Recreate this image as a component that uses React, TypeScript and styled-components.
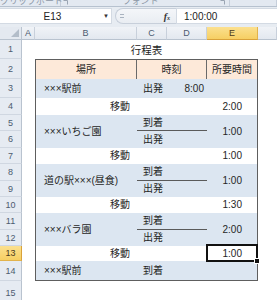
import React from 'react';
import styled, { createGlobalStyle } from 'styled-components';

const ROW_H = [19, 20, 19, 17, 16, 17, 16, 17, 16, 16, 17, 16, 15, 20, 24];
const COLS = [
  { id: 'A', w: 13 },
  { id: 'B', w: 102 },
  { id: 'C', w: 30 },
  { id: 'D', w: 40 },
  { id: 'E', w: 51 },
  { id: '', w: 0 },
];
const ACTIVE_COL = 'E';
const ACTIVE_ROW = 13;

const GlobalStyle = createGlobalStyle`
  html, body { margin: 0; padding: 0; background: #fff; }
  body {
    font-family: "Noto Sans CJK JP", "Liberation Sans", sans-serif;
    overflow: hidden;
  }
`;

const Window = styled.div`
  width: 277px;
  height: 300px;
  overflow: hidden;
  display: flex;
  flex-direction: column;
  background: #fff;
`;

/* ribbon bottom edge, only the group captions' lower half shows */
const Ribbon = styled.div`
  height: 6px;
  flex: none;
  display: flex;
  overflow: hidden;
  background: #e3e9f1;
  border-bottom: 1px solid #b7c2cf;
`;

const RibbonGroup = styled.div<{ $w?: number }>`
  ${p => (p.$w ? `width: ${p.$w}px; flex: none;` : 'flex: 1;')}
  display: flex;
  align-items: flex-end;
  padding-right: 3px;
  border-right: 1px solid #c6cfdb;
`;

const RibbonLabel = styled.span`
  flex: 1;
  text-align: center;
  font-size: 9px;
  line-height: 9px;
  margin-bottom: 1px;
  color: #8c97a6;
  white-space: nowrap;
`;

const Launcher = styled.svg`
  flex: none;
  margin-bottom: 1px;
`;

const FormulaBar = styled.div`
  height: 20px;
  flex: none;
  display: flex;
  align-items: flex-start;
  padding-top: 1px;
  box-sizing: border-box;
  background: #e7ecf2;
`;

const NameBox = styled.div`
  width: 112px;
  height: 16px;
  box-sizing: border-box;
  display: flex;
  align-items: center;
  background: #fff;
  border: 1px solid #d3dae3;
  border-left: none;
  font-family: "Liberation Sans", sans-serif;
  font-size: 10px;
  color: #222;
`;

const NameText = styled.span`
  flex: 1;
  text-align: center;
  padding-left: 2px;
`;

const DropArrow = styled.span`
  width: 8px;
  font-size: 6px;
  color: #333;
`;

const FxArea = styled.div`
  width: 61px;
  height: 16px;
  margin-left: 3px;
  box-sizing: border-box;
  display: flex;
  align-items: center;
  border: 1px solid #c7cfda;
  border-right: none;
  border-radius: 8px 0 0 8px;
  background: linear-gradient(#f4f6f9, #e9edf2);
`;

const Grip = styled.span`
  width: 4px;
  height: 2px;
  margin-left: 4px;
  border-top: 1px solid #a9b3c0;
  border-bottom: 1px solid #a9b3c0;
`;

const Fx = styled.span`
  margin-left: auto;
  margin-right: 6px;
  font-family: "Liberation Serif", serif;
  font-style: italic;
  font-weight: bold;
  font-size: 10px;
  color: #333;
  & sub { font-size: 6px; vertical-align: baseline; }
`;

const FormulaInput = styled.div`
  flex: 1;
  height: 16px;
  box-sizing: border-box;
  display: flex;
  align-items: center;
  padding-left: 7px;
  background: #fff;
  border: 1px solid #d3dae3;
  border-right: none;
  font-family: "Liberation Sans", sans-serif;
  font-size: 10px;
  color: #222;
`;

const Sheet = styled.div`
  flex: 1;
  display: grid;
  grid-template-columns: 22px ${COLS.map(c => (c.w ? `${c.w}px` : '1fr')).join(' ')};
  grid-template-rows: 13px ${ROW_H.map(h => `${h}px`).join(' ')} 1fr;
  background: #fff;
`;

const headBox = `
  box-sizing: border-box;
  display: flex;
  align-items: center;
  justify-content: center;
  font-family: "Liberation Sans", sans-serif;
  font-size: 9px;
`;

const Corner = styled.div`
  ${headBox}
  grid-row: 1;
  grid-column: 1;
  justify-content: flex-end;
  align-items: flex-end;
  padding: 0 2px 2px 0;
  background: #e4e9f0;
  border-right: 1px solid #b9c3cf;
  border-bottom: 1px solid #b9c3cf;
`;

const ColHead = styled.div<{ $c: number; $active?: boolean }>`
  ${headBox}
  grid-row: 1;
  grid-column: ${p => p.$c};
  background: ${p => (p.$active ? 'linear-gradient(#fbe08f, #f6cf63)' : 'linear-gradient(#f0f3f7, #e3e8ef)')};
  border-right: 1px solid ${p => (p.$active ? '#e2b34c' : '#c8d0db')};
  border-bottom: 1px solid ${p => (p.$active ? '#d9a23a' : '#b9c3cf')};
  color: ${p => (p.$active ? '#4a3b1c' : '#4c5b70')};
`;

const RowHead = styled.div<{ $r: number; $active?: boolean }>`
  ${headBox}
  grid-column: 1;
  grid-row: ${p => p.$r};
  background: ${p => (p.$active ? 'linear-gradient(#fbe08f, #f6cf63)' : '#e6ebf2')};
  border-right: 1px solid ${p => (p.$active ? '#d9a23a' : '#b9c3cf')};
  border-bottom: 1px solid ${p => (p.$active ? '#e2b34c' : '#d0d7e1')};
  color: ${p => (p.$active ? '#4a3b1c' : '#4c5b70')};
`;

const Title = styled.div`
  grid-row: 2;
  grid-column: 3 / 7;
  display: flex;
  align-items: center;
  justify-content: center;
  font-size: 10.5px;
  color: #222;
`;

const Table = styled.div`
  grid-row: 3 / 16;
  grid-column: 3 / 7;
  display: flex;
  flex-direction: column;
  border: 1px solid #5e5e5e;
  color: #262626;
  font-family: "Liberation Sans", "Noto Sans CJK JP", sans-serif;
  font-size: 10px;
`;

const Band = styled.div<{ $rows: string; $tone: 'head' | 'tint' | 'plain' }>`
  display: grid;
  grid-template-columns: 101px 30px 40px 50px;
  grid-template-rows: ${p => p.$rows};
  background: ${p => (p.$tone === 'head' ? '#fde9d9' : p.$tone === 'tint' ? '#dce6f1' : '#fff')};
`;

const Cell = styled.div<{
  $col: string;
  $row?: string;
  $align?: 'start' | 'center' | 'end';
  $pad?: string;
  $rule?: boolean;
  $divide?: boolean;
}>`
  position: relative;
  grid-column: ${p => p.$col};
  grid-row: ${p => p.$row ?? 'auto'};
  box-sizing: border-box;
  display: flex;
  align-items: center;
  justify-content: ${p => (p.$align === 'end' ? 'flex-end' : p.$align === 'center' ? 'center' : 'flex-start')};
  padding: ${p => p.$pad ?? '0'};
  white-space: nowrap;
  line-height: 1;
  ${p => (p.$rule ? 'border-bottom: 1px solid #5a5a5a;' : '')}
  ${p => (p.$divide ? 'border-right: 1px solid #6a6a6a;' : '')}
`;

const Selection = styled.div`
  position: absolute;
  top: -2px;
  left: -1px;
  right: -1px;
  bottom: -1px;
  border: 2px solid #111;
  pointer-events: none;
`;

const FillHandle = styled.span`
  position: absolute;
  right: -4px;
  bottom: -4px;
  width: 4px;
  height: 4px;
  background: #111;
  border: 1px solid #fff;
`;

type Stop = { place: string; span: [number, number]; time: string };
type Move = { time: string; h: number; selected?: boolean };

const stops: Stop[] = [
  { place: '×××いちご園', span: [16, 17], time: '1:00' },
  { place: '道の駅×××(昼食)', span: [17, 16], time: '1:00' },
  { place: '×××バラ園', span: [17, 16], time: '2:00' },
];

const moves: Move[] = [
  { time: '2:00', h: 17 },
  { time: '1:00', h: 16 },
  { time: '1:30', h: 16 },
  { time: '1:00', h: 15, selected: true },
];

const MoveRow = ({ m }: { m: Move }) => (
  <Band $rows={`${m.h}px`} $tone="plain">
    <Cell $col="1" $align="end" $pad="0 7px 0 0">移動</Cell>
    <Cell $col="4" $align="end" $pad="0 15px 0 0">
      {m.time}
      {m.selected && (
        <Selection>
          <FillHandle />
        </Selection>
      )}
    </Cell>
  </Band>
);

const StopRow = ({ s }: { s: Stop }) => (
  <Band $rows={`${s.span[0]}px ${s.span[1]}px`} $tone="tint">
    <Cell $col="1" $row="1 / 3" $pad="0 0 0 8px">{s.place}</Cell>
    <Cell $col="2 / 4" $row="1" $pad="0 0 0 6px" $rule>到着</Cell>
    <Cell $col="2 / 4" $row="2" $pad="0 0 0 6px">出発</Cell>
    <Cell $col="4" $row="1 / 3" $align="end" $pad="0 15px 0 0">{s.time}</Cell>
  </Band>
);

export default function App() {
  return (
    <>
      <GlobalStyle />
      <Window>
        <Ribbon>
          <RibbonGroup $w={57}>
            <RibbonLabel>クリップボード</RibbonLabel>
            <Launcher width="6" height="5" viewBox="0 0 6 5">
              <path d="M0.5 0.5h4v4" fill="none" stroke="#9aa5b3" />
            </Launcher>
          </RibbonGroup>
          <RibbonGroup $w={165}>
            <RibbonLabel>フォント</RibbonLabel>
            <Launcher width="6" height="5" viewBox="0 0 6 5">
              <path d="M0.5 0.5h4v4" fill="none" stroke="#9aa5b3" />
            </Launcher>
          </RibbonGroup>
          <RibbonGroup>
            <RibbonLabel />
          </RibbonGroup>
        </Ribbon>

        <FormulaBar>
          <NameBox>
            <NameText>E13</NameText>
            <DropArrow>▼</DropArrow>
          </NameBox>
          <FxArea>
            <Grip />
            <Fx>
              f<sub>x</sub>
            </Fx>
          </FxArea>
          <FormulaInput>1:00:00</FormulaInput>
        </FormulaBar>

        <Sheet>
          <Corner>
            <svg width="8" height="8" viewBox="0 0 8 8">
              <path d="M8 0V8H0Z" fill="#b3bdc9" />
            </svg>
          </Corner>
          {COLS.map((c, i) => (
            <ColHead key={i} $c={i + 2} $active={c.id === ACTIVE_COL}>
              {c.id}
            </ColHead>
          ))}
          {ROW_H.map((_, i) => (
            <RowHead key={i} $r={i + 2} $active={i + 1 === ACTIVE_ROW}>
              {i + 1}
            </RowHead>
          ))}

          <Title>行程表</Title>

          <Table>
            <Band $rows="19px" $tone="head">
              <Cell $col="1" $align="center" $divide>場所</Cell>
              <Cell $col="2 / 4" $align="center" $divide>時刻</Cell>
              <Cell $col="4" $align="center">所要時間</Cell>
            </Band>
            <Band $rows="19px" $tone="tint">
              <Cell $col="1" $pad="0 0 0 8px">×××駅前</Cell>
              <Cell $col="2" $pad="0 0 0 6px">出発</Cell>
              <Cell $col="3" $align="end" $pad="0 3px 0 0">8:00</Cell>
            </Band>
            <MoveRow m={moves[0]} />
            <StopRow s={stops[0]} />
            <MoveRow m={moves[1]} />
            <StopRow s={stops[1]} />
            <MoveRow m={moves[2]} />
            <StopRow s={stops[2]} />
            <MoveRow m={moves[3]} />
            <Band $rows="19px" $tone="tint">
              <Cell $col="1" $pad="0 0 0 8px">×××駅前</Cell>
              <Cell $col="2 / 4" $pad="0 0 0 6px">到着</Cell>
            </Band>
          </Table>
        </Sheet>
      </Window>
    </>
  );
}
